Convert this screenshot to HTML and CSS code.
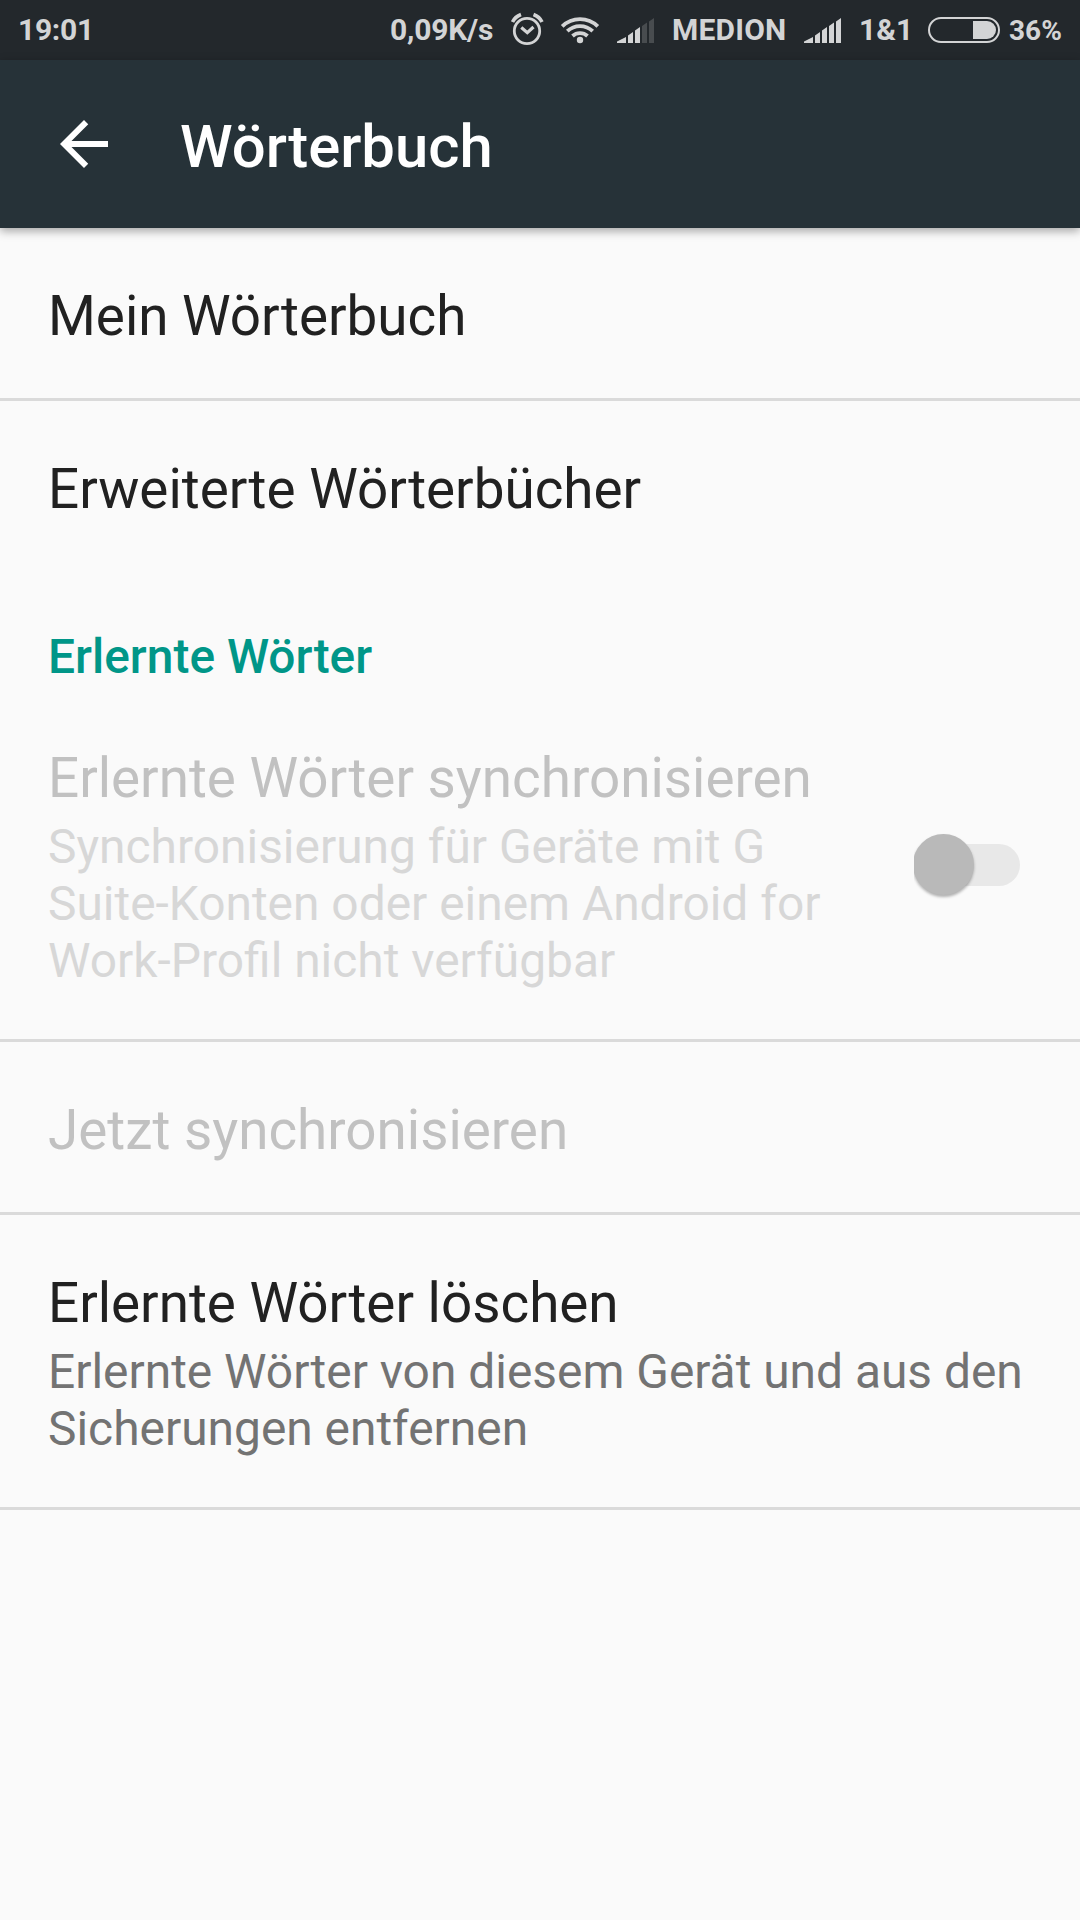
FILE: index.html
```html
<!doctype html>
<html lang="de">
  <head>
    <meta charset="UTF-8" />
    <title>Wörterbuch</title>
    <link rel="stylesheet" href="styles.css">
  </head>
  <body>
    <div class="statusbar">
      <span class="clock">19:01</span>
      <span class="speed">0,09K/s</span>
      <svg class="alarm" width="34" height="34" viewBox="0 0 34 34" fill="none" stroke="#d3d4d5">
        <circle cx="17" cy="19" r="12.7" stroke-width="2.8" />
        <path d="M11.3 15.5l6 5.2 6.2-5.7" stroke-width="3.2" />
        <path d="M2.5 10C4.3 6.2 7 4 11 2.5M32 10C30.2 6.2 27.5 4 23.5 2.5" stroke-width="3.6" />
      </svg>
      <svg class="wifi" width="40" height="28" viewBox="0 0 40 28" fill="none" stroke="#d3d4d5" stroke-width="3.8">
        <path d="M2.2 10.3a25.5 25.5 0 0 1 35.6 0" />
        <path d="M7.3 15.2a18.5 18.5 0 0 1 25.4 0" />
        <path d="M12.5 20a11 11 0 0 1 15 0" />
        <circle cx="20" cy="24" r="3.2" fill="#d3d4d5" stroke="none" />
      </svg>
      <svg class="signal" width="37" height="25" viewBox="0 0 37 25" fill="#d3d4d5">
        <path d="M0 25v-1.5L9 19v6zM11 25v-7.5l5-3.5v11zM18 25V12.5L23 9v16z" />
        <path d="M25 25V8l5-3.5V25zM32 25V3.5L37 0v25z" fill="#484c4f" />
      </svg>
      <span class="carrier">MEDION</span>
      <svg class="signal" width="37" height="25" viewBox="0 0 37 25" fill="#d3d4d5">
        <path d="M0 25v-1.5L9 19v6zM11 25v-7.5l5-3.5v11zM18 25V12.5L23 9v16zM25 25V8l5-3.5V25zM32 25V3.5L37 0v25z" />
      </svg>
      <span class="carrier2">1&amp;1</span>
      <svg class="battery" width="72" height="26" viewBox="0 0 72 26">
        <rect x="1" y="1" width="70" height="24" rx="12" fill="none" stroke="#d3d4d5" stroke-width="2" />
        <path d="M45 4h14a9 9 0 0 1 0 18H45z" fill="#d3d4d5" />
      </svg>
      <span class="percent">36%</span>
    </div>

    <div class="appbar">
      <svg class="back" width="72" height="72" viewBox="0 0 24 24" fill="#fff">
        <path d="M20 11H7.83l5.59-5.59L12 4l-8 8 8 8 1.41-1.41L7.83 13H20v-2z" />
      </svg>
      <h1>Wörterbuch</h1>
    </div>

    <div class="list">
      <div class="item divider">
        <div class="title">Mein Wörterbuch</div>
      </div>
      <div class="item">
        <div class="title">Erweiterte Wörterbücher</div>
      </div>

      <h2 class="category">Erlernte Wörter</h2>

      <div class="item divider disabled">
        <div class="text">
          <div class="title">Erlernte Wörter synchronisieren</div>
          <div class="summary">Synchronisierung für Geräte mit G<br>Suite-Konten oder einem Android for<br>Work-Profil nicht verfügbar</div>
        </div>
        <div class="switch"><div class="thumb"></div></div>
      </div>
      <div class="item divider disabled">
        <div class="title">Jetzt synchronisieren</div>
      </div>
      <div class="item divider">
        <div class="text">
          <div class="title">Erlernte Wörter löschen</div>
          <div class="summary">Erlernte Wörter von diesem Gerät und aus den<br>Sicherungen entfernen</div>
        </div>
      </div>
    </div>
  </body>
</html>
```
FILE: styles.css
```css
body {
  margin: 0;
  min-height: 1920px;
  font-family: Roboto, sans-serif;
  background-color: #fafafa;
  color: #212121;
}

.statusbar {
  display: flex;
  align-items: flex-start;
  height: 60px;
  padding-left: 18px;
  box-sizing: border-box;
  background-color: #23282c;
  color: #d3d4d5;
  font-size: 30px;
  font-weight: 700;
  line-height: 36px;
  white-space: nowrap;
}

.statusbar svg {
  flex: none;
}

.statusbar span {
  flex: none;
  margin-top: 12px;
}

.clock {
  width: 372px;
  letter-spacing: -0.3px;
}

.speed {
  width: 120px;
  letter-spacing: -0.2px;
}

.alarm {
  margin-top: 12px;
}

.wifi {
  margin: 16px 17px 0 16px;
}

.signal {
  margin-top: 18px;
}

.carrier {
  width: 132px;
  margin-left: 18px;
  letter-spacing: 0.2px;
}

.carrier2 {
  width: 69px;
  margin-left: 18px;
}

.battery {
  margin-top: 17px;
}

.statusbar .percent {
  margin-left: 9px;
  font-size: 28px;
  margin-top: 13px;
}

.appbar {
  position: relative;
  display: flex;
  align-items: center;
  height: 168px;
  padding-left: 48px;
  background-color: #263238;
  box-shadow: 0 3px 9px rgba(0, 0, 0, 0.35);
}

.appbar h1 {
  margin: 0 0 0 60px;
  padding-top: 5px;
  color: #fff;
  font-size: 59.8px;
  font-weight: 500;
  line-height: 70px;
}

.item {
  display: flex;
  justify-content: space-between;
  align-items: center;
  padding: 51px 60px 45px 48px;
}

.divider {
  border-bottom: 3px solid #dadada;
}

.title {
  font-size: 54.8px;
  line-height: 74px;
  white-space: nowrap;
}

.summary {
  margin: 4px 0;
  color: #737373;
  font-size: 47.9px;
  line-height: 57px;
  white-space: nowrap;
}

.disabled .title {
  color: #c1c1c1;
}

.disabled .summary {
  color: #d7d7d7;
}

.category {
  height: 61px;
  margin: 0;
  padding: 58px 48px 0;
  color: #009688;
  font-size: 47.9px;
  font-weight: 500;
  line-height: 57px;
}

/* left edge cuts off the thumb shadow */
.switch {
  display: flex;
  align-items: center;
  width: 106px;
  height: 42px;
  margin-bottom: 6px;
  border-radius: 0 21px 21px 0;
  background: linear-gradient(to right, transparent 30px, #e8e8e8 30px);
  clip-path: inset(-20px 0 -20px 0);
}

.thumb {
  width: 61px;
  height: 61px;
  margin-left: -1px;
  flex: none;
  border-radius: 50%;
  background-color: #b9b9b9;
  box-shadow: 0 2px 3px rgba(0, 0, 0, 0.3);
}
```
